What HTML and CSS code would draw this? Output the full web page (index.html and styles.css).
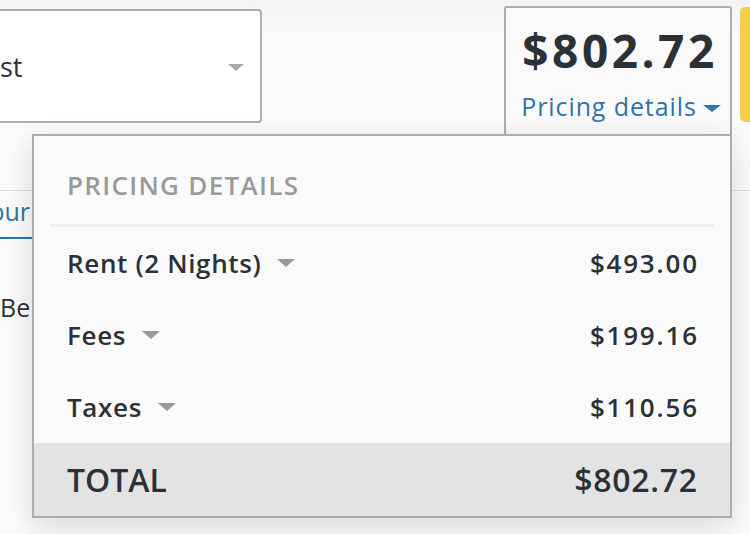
FILE: index.html
```html
<!DOCTYPE html>
<html>
<head>
<meta charset="utf-8">
<link rel="stylesheet" href="styles.css">
</head>
<body>
<div class="page">
  <header class="topbar">
    <div class="select">
      <span class="select-text">st</span>
      <span class="caret caret-gray"></span>
    </div>
    <div class="spacer"></div>
    <div class="pricebox">
      <div class="price-big">$802.72</div>
      <div class="price-link"><span>Pricing details</span><span class="caret caret-blue"></span></div>
    </div>
    <div class="book"></div>
  </header>
  <nav class="tabs">
    <div class="tab active">our</div>
  </nav>
  <div class="content">Be</div>

  <div class="panel">
    <div class="panel-head">PRICING DETAILS</div>
    <div class="sep"></div>
    <div class="row">
      <div class="label">Rent (2 Nights)<span class="caret caret-row"></span></div>
      <div class="amt">$493.00</div>
    </div>
    <div class="row">
      <div class="label">Fees<span class="caret caret-row"></span></div>
      <div class="amt">$199.16</div>
    </div>
    <div class="row">
      <div class="label">Taxes<span class="caret caret-row"></span></div>
      <div class="amt">$110.56</div>
    </div>
    <div class="row total">
      <div class="label">TOTAL</div>
      <div class="amt">$802.72</div>
    </div>
  </div>
</div>
</body>
</html>
```
FILE: styles.css
```css
* { box-sizing: border-box; }
html, body { margin: 0; padding: 0; }
body {
  width: 750px;
  height: 534px;
  overflow: hidden;
  background: #fbfbfb;
  font-family: "Open Sans", "Lato", sans-serif;
  color: #2b3237;
}
.page { position: relative; width: 750px; height: 534px; overflow: hidden; }

.topbar {
  display: flex;
  align-items: flex-start;
  height: 191px;
  border-bottom: 1px solid #dcdcdc;
  background: linear-gradient(#f3f3f3, #fbfbfb 40px, #fbfbfb);
}
.select {
  margin-top: 9px;
  margin-left: -20px;
  width: 282px;
  height: 114px;
  border: 2px solid #b0b0b0;
  border-radius: 4px;
  background: #fff;
  display: flex;
  align-items: center;
  justify-content: space-between;
  padding: 0 16px 0 18px;
}
.select-text { font-size: 27px; color: #2b3237; }
.caret {
  display: inline-block;
  width: 0; height: 0;
  border-left: 8px solid transparent;
  border-right: 8px solid transparent;
}
.caret-gray { border-top: 7px solid #aaa; margin-top: 2px; }
.spacer { flex: 1; }
.pricebox {
  margin-top: 6px;
  width: 228px;
  height: 130px;
  border: 2px solid #adadad;
  border-bottom: none;
  border-radius: 3px 3px 0 0;
  background: #fafafa;
  display: flex;
  flex-direction: column;
  align-items: center;
}
.price-big {
  margin-top: 14px;
  padding-left: 4px;
  font-size: 46px;
  font-weight: 700;
  line-height: 56px;
  letter-spacing: 3.5px;
  color: #2b3237;
}
.price-link {
  margin-top: 12px;
  padding-left: 6px;
  height: 35px;
  overflow: hidden;
  color: #2f74a9;
  font-size: 25px;
  letter-spacing: 0.9px;
  line-height: 32px;
  display: flex;
  align-items: flex-start;
  gap: 6px;
}
.caret-blue {
  border-left-width: 9px; border-right-width: 9px;
  border-top: 7px solid #2f74a9;
  margin-top: 15px;
}
.book {
  margin-top: 7px;
  margin-left: 8px;
  margin-right: -30px;
  width: 40px;
  flex-shrink: 0;
  height: 115px;
  background: #f6cf49;
  border-radius: 5px;
}
.tabs { display: flex; height: 48px; }
.tab {
  font-size: 25px;
  color: #2f74a9;
  padding: 3px 3px 0 0;
  width: 33px;
  border-bottom: 2px solid #2f74a9;
  white-space: nowrap;
  display: flex;
  justify-content: flex-end;
}
.content { margin-top: 51px; font-size: 25px; color: #2b3237; }

.panel {
  position: absolute;
  left: 32px;
  top: 134px;
  width: 700px;
  height: 384px;
  border: 2px solid #adadad;
  background: #fafafa;
  box-shadow: 0 8px 28px rgba(0,0,0,0.14);
}
.panel-head {
  height: 88px;
  padding: 33px 33px 0;
  font-size: 26px;
  line-height: 32px;
  font-weight: 600;
  letter-spacing: 1.3px;
  color: #9a9a9a;
}
.sep { height: 3px; margin: 0 16px; background: #f0f0f0; }
.row {
  height: 72px;
  padding: 0 33px;
  display: flex;
  align-items: center;
  justify-content: space-between;
  font-size: 26px;
  font-weight: 600;
  letter-spacing: 0.65px;
  color: #2b3237;
}
.amt { letter-spacing: 1.8px; margin-right: -1.8px; }
.label { display: flex; align-items: center; gap: 16px; }
.caret-row { border-left-width: 9px; border-right-width: 9px; border-top: 8px solid #999; }
.row.total {
  height: 73px;
  background: #e3e3e3;
  font-size: 32px;
  letter-spacing: 0;
}
.row.total .amt { letter-spacing: 0.7px; margin-right: -0.7px; }
```
